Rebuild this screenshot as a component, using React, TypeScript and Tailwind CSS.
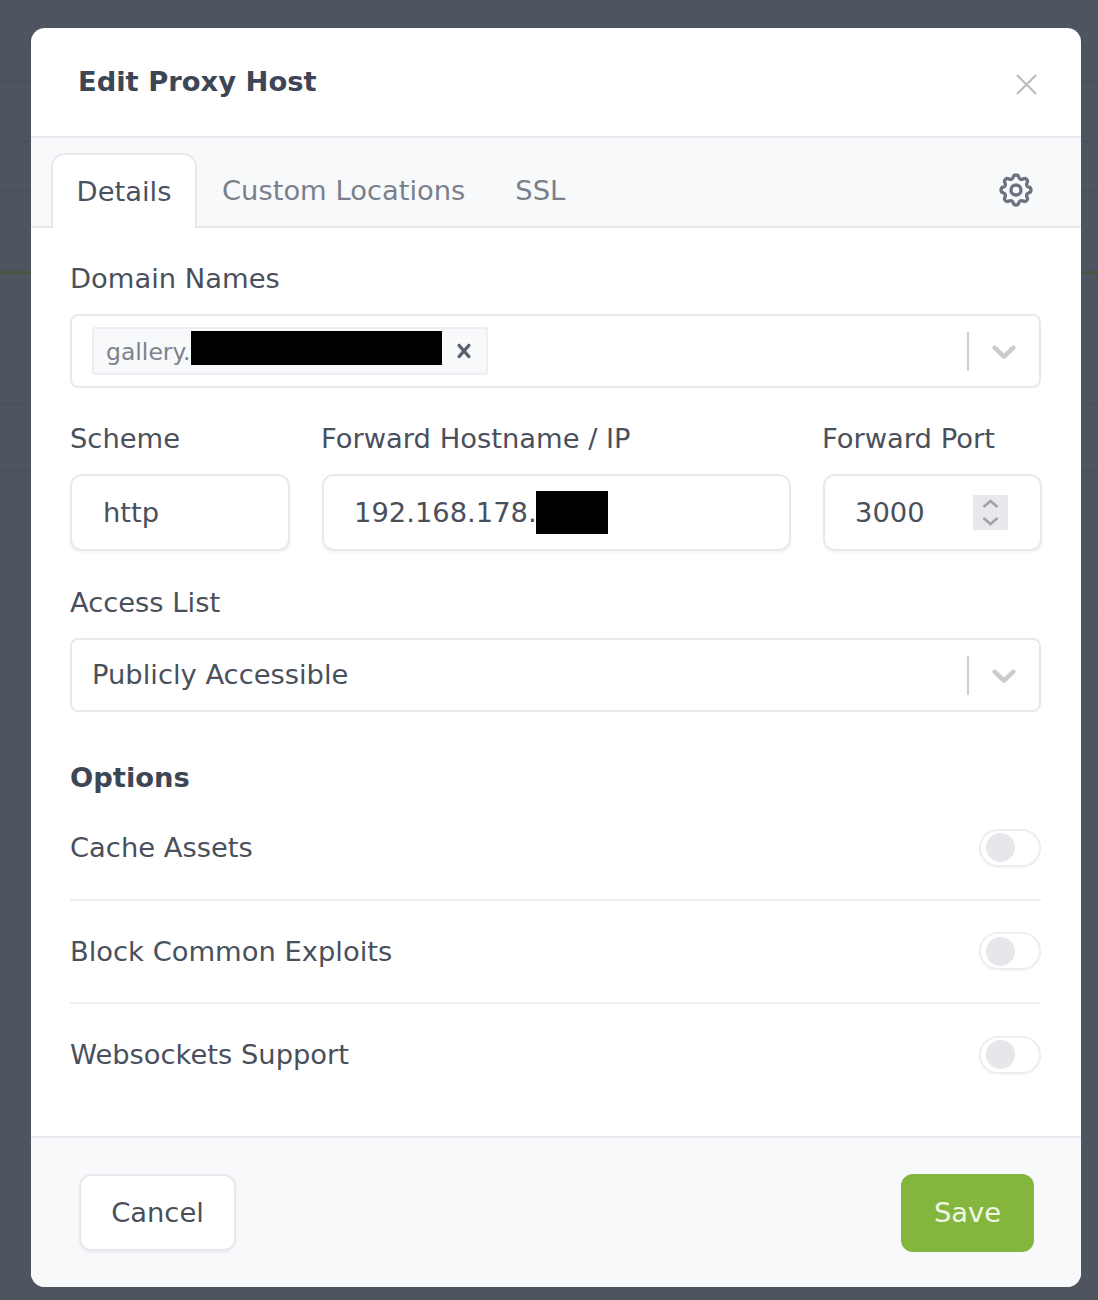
import { TbSettings } from "react-icons/tb";

const CHEVRON =
  "M4.516 7.548c0.436-0.446 1.043-0.481 1.576 0l3.908 3.747 3.908-3.747c0.533-0.481 1.141-0.446 1.574 0 0.436 0.445 0.408 1.197 0 1.615-0.406 0.418-4.695 4.502-4.695 4.502-0.217 0.223-0.502 0.335-0.787 0.335s-0.57-0.112-0.789-0.335c0 0-4.287-4.084-4.695-4.502s-0.436-1.17 0-1.615z";
const CROSS =
  "M14.348 14.849c-0.469 0.469-1.229 0.469-1.697 0l-2.651-3.030-2.651 3.029c-0.469 0.469-1.229 0.469-1.697 0-0.469-0.469-0.469-1.229 0-1.697l2.758-3.15-2.759-3.152c-0.469-0.469-0.469-1.228 0-1.697s1.228-0.469 1.697 0l2.652 3.031 2.651-3.031c0.469-0.469 1.228-0.469 1.697 0s0.469 1.229 0 1.697l-2.758 3.152 2.758 3.15c0.469 0.469 0.469 1.229 0 1.698z";

const backdropLines = [
  { y: "top-[80px]", color: "bg-[#4a525e]" },
  { y: "top-[140px]", color: "bg-[#4a525e]" },
  { y: "top-[190px]", color: "bg-[#4a525e]" },
  { y: "top-[300px]", color: "bg-[#4a525e]" },
  { y: "top-[403px]", color: "bg-[#4a525e]" },
  { y: "top-[470px]", color: "bg-[#4a525e]" },
  { y: "top-[612px]", color: "bg-[#4a525e]" },
];

function SelectIndicator() {
  return (
    <div className="flex items-center">
      <span className="h-[39px] w-[2px] bg-[#cfcfcf]" />
      <svg viewBox="0 0 20 20" className="mx-[15px] h-[40px] w-[40px] fill-[#cccccc]">
        <path d={CHEVRON} />
      </svg>
    </div>
  );
}

function Label({ children }: { children: string }) {
  return <div className="mb-[18px] h-[35px] leading-[35px]">{children}</div>;
}

function Toggle() {
  return (
    <span className="flex h-[38px] w-[62px] items-center rounded-full border-2 border-[#eeeef2] bg-white pl-[5px] shadow-[0_1px_2px_rgba(0,0,0,0.04)]">
      <span className="h-[29px] w-[29px] rounded-full bg-[#e6e7eb]" />
    </span>
  );
}

function OptionRow({ label, last }: { label: string; last?: boolean }) {
  return (
    <div
      className={`flex h-[103.5px] items-center justify-between border-b-2 ${last ? "border-transparent" : "border-[#eeeef3]"}`}
    >
      <span>{label}</span>
      <Toggle />
    </div>
  );
}

export default function App() {
  return (
    <div
      className="relative h-[1300px] overflow-hidden bg-[#4e5560] pt-[28px] text-[27.35px] text-[#49505c]"
      style={{ fontFamily: '"DejaVu Sans", sans-serif' }}
    >
      {backdropLines.map((line) => (
        <div key={line.y} className={`absolute inset-x-0 h-[2px] ${line.y} ${line.color}`} />
      ))}
      <div className="absolute inset-x-0 top-[271px] h-[3px] bg-[#45573f]" />

      <div className="relative mx-[31px] flex h-[1259px] w-[1050px] flex-col overflow-hidden rounded-[14px] bg-white">
        <header className="flex h-[110px] items-center justify-between border-b-2 border-[#e8e9ee] pl-[47px] pr-[41px]">
          <h1 className="text-[27.35px] font-bold text-[#3d4654]">Edit Proxy Host</h1>
          <svg viewBox="0 0 24 24" className="mt-[5px] h-[27px] w-[27px] fill-none stroke-[#b9bcc2] stroke-[1.9]">
            <path d="M3.5 3.5l17 17M20.5 3.5l-17 17" />
          </svg>
        </header>

        <nav className="flex h-[90px] items-end border-b-2 border-[#e8e9ee] bg-[#f8f9fb] pl-[20px] pr-[45px]">
          <div className="-mb-[2px] flex h-[75px] w-[146px] items-center justify-center rounded-t-[14px] border-2 border-b-0 border-[#e8e9ee] bg-white text-[#4a5260]">
            Details
          </div>
          <div className="ml-[25px] flex h-[70px] items-center text-[#7a808b]">Custom Locations</div>
          <div className="ml-[50px] flex h-[70px] items-center text-[#7a808b]">SSL</div>
          <div className="ml-auto flex h-[72px] items-center">
            <TbSettings className="h-[40px] w-[40px] text-[#6b7280]" />
          </div>
        </nav>

        <div className="flex-1 pl-[39px] pr-[40px] pt-[33px]">
          <Label>Domain Names</Label>
          <div className="flex h-[74px] items-center justify-between rounded-[8px] border-2 border-[#e8e9ee] pl-[20px]">
            <div className="relative flex h-[48px] w-[396px] items-center rounded-[3px] border-2 border-[#eceef2] bg-[#f8f9fb] pl-[12px] pt-[3px] text-[23.5px] text-[#7d828c]">
              gallery.s
              <span className="absolute left-[97px] top-[2px] h-[34px] w-[251px] bg-black" />
              <svg viewBox="0 0 20 20" className="absolute right-[8px] top-[8px] h-[28px] w-[28px] fill-[#5a616d]">
                <path d={CROSS} />
              </svg>
            </div>
            <SelectIndicator />
          </div>

          <div className="mt-[33px] grid grid-cols-[220px_469px_219px] gap-x-[32px]">
            <div>
              <Label>Scheme</Label>
              <div className="flex h-[77px] items-center rounded-[12px] border-2 border-[#e8e9ee] pl-[31px] shadow-[0_2px_3px_rgba(0,0,0,0.05)]">
                <span>http</span>
              </div>
            </div>
            <div>
              <div className="-ml-[1px]">
                <Label>Forward Hostname / IP</Label>
              </div>
              <div className="flex h-[77px] items-center rounded-[12px] border-2 border-[#e8e9ee] pl-[30px] shadow-[0_2px_3px_rgba(0,0,0,0.05)]">
                <span>192.168.178.</span>
                <span className="-ml-[1px] h-[43px] w-[72px] bg-black" />
              </div>
            </div>
            <div>
              <div className="-ml-[1px]">
                <Label>Forward Port</Label>
              </div>
              <div className="flex h-[77px] items-center justify-between rounded-[12px] border-2 border-[#e8e9ee] pl-[30px] pr-[32px] shadow-[0_2px_3px_rgba(0,0,0,0.05)]">
                <span>3000</span>
                <svg viewBox="0 0 35 35" className="h-[35px] w-[35px] fill-none stroke-[#a0a3ab] stroke-[2.5]">
                  <rect width="35" height="35" fill="#e8e8ed" stroke="none" />
                  <path d="M10.5 12l7-6 7 6M10.5 23l7 6 7-6" />
                </svg>
              </div>
            </div>
          </div>

          <div className="mt-[34px]">
            <Label>Access List</Label>
            <div className="flex h-[74px] items-center justify-between rounded-[8px] border-2 border-[#e8e9ee] pl-[20px]">
              <span>Publicly Accessible</span>
              <SelectIndicator />
            </div>
          </div>

          <h2 className="mt-[48px] h-[35px] font-bold leading-[35px] text-[#3d4654]">Options</h2>
          <div className="mt-[2px]">
            <OptionRow label="Cache Assets" />
            <OptionRow label="Block Common Exploits" />
            <OptionRow label="Websockets Support" last />
          </div>
        </div>

        <footer className="flex h-[151px] items-center justify-between border-t-2 border-[#e8e9ee] bg-[#f8f9fb] pl-[48px] pr-[47px]">
          <button className="h-[77px] w-[157px] rounded-[12px] border-2 border-[#e8e9ee] bg-white text-[#49505c] shadow-[0_2px_3px_rgba(0,0,0,0.05)]">
            Cancel
          </button>
          <button className="h-[78px] w-[133px] rounded-[12px] bg-[#84b63d] text-[#f0f6e4]">Save</button>
        </footer>
      </div>
    </div>
  );
}
